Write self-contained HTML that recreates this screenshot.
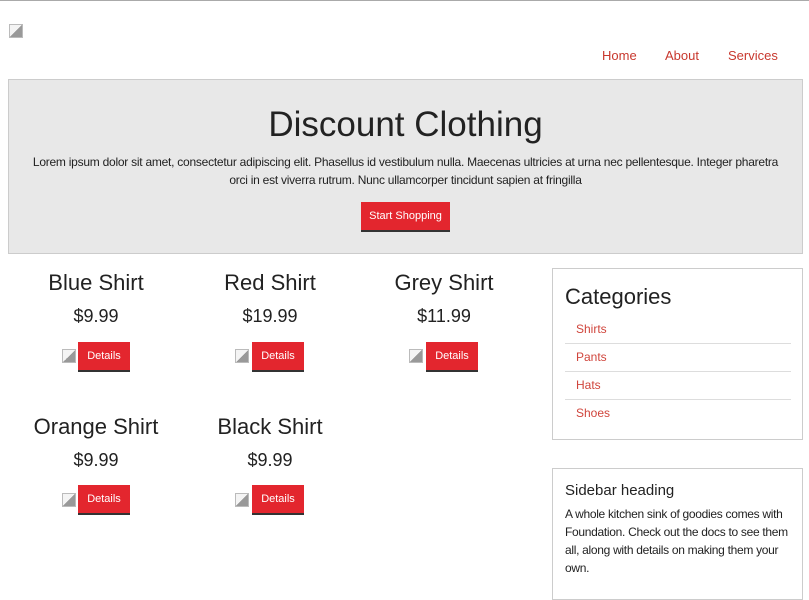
<!DOCTYPE html>
<html><head><style>
body{margin:0;width:809px;height:581px;overflow:hidden;background:#fff;font-family:"Liberation Sans",sans-serif;color:#222;position:relative;border-top:1px solid #aaa;box-sizing:border-box}
.a{position:absolute}
.nav{top:47px;font-size:13px;color:#c8382e}
.img{width:12px;height:12px;border:1px solid #bbb;background:linear-gradient(135deg,#f4f4f4 50%,#999 50%)}
.hero{left:8px;top:78px;width:793px;height:173px;background:#e8e8e8;border:1px solid #ccc}
.btn{background:#e3262e;color:#fff;font-size:11px;text-align:center;border-bottom:2px solid #333;box-sizing:border-box}
.t{font-size:22px;text-align:center;width:170px}
.p{font-size:18px;text-align:center;width:170px}
.box{left:552px;width:249px;border:1px solid #ccc}
.cat{font-size:12px;color:#d0453c;padding-left:11px;height:27px;line-height:27px;border-bottom:1px solid #ddd}
</style></head><body>
<div class="a img" style="left:9px;top:23px"></div>
<div class="a nav" style="left:602px">Home</div>
<div class="a nav" style="left:665px">About</div>
<div class="a nav" style="left:728px">Services</div>
<div class="a hero">
<div style="text-align:center;font-size:35px;margin-top:25px">Discount Clothing</div>
<div style="text-align:center;font-size:12px;letter-spacing:-0.25px;line-height:18px;margin:8px 14px 0">Lorem ipsum dolor sit amet, consectetur adipiscing elit. Phasellus id vestibulum nulla. Maecenas ultricies at urna nec pellentesque. Integer pharetra orci in est viverra rutrum. Nunc ullamcorper tincidunt sapien at fringilla</div>
</div>
<div class="a btn" style="left:361px;top:201px;width:89px;height:30px;line-height:28px">Start Shopping</div>

<div class="a t" style="left:11px;top:269px">Blue Shirt</div><div class="a p" style="left:11px;top:305px">$9.99</div>
<div class="a img" style="left:62px;top:348px"></div><div class="a btn" style="left:78px;top:341px;width:52px;height:30px;line-height:28px">Details</div>
<div class="a t" style="left:185px;top:269px">Red Shirt</div><div class="a p" style="left:185px;top:305px">$19.99</div>
<div class="a img" style="left:235px;top:348px"></div><div class="a btn" style="left:252px;top:341px;width:52px;height:30px;line-height:28px">Details</div>
<div class="a t" style="left:359px;top:269px">Grey Shirt</div><div class="a p" style="left:359px;top:305px">$11.99</div>
<div class="a img" style="left:409px;top:348px"></div><div class="a btn" style="left:426px;top:341px;width:52px;height:30px;line-height:28px">Details</div>
<div class="a t" style="left:11px;top:413px">Orange Shirt</div><div class="a p" style="left:11px;top:449px">$9.99</div>
<div class="a img" style="left:62px;top:492px"></div><div class="a btn" style="left:78px;top:484px;width:52px;height:30px;line-height:28px">Details</div>
<div class="a t" style="left:185px;top:413px">Black Shirt</div><div class="a p" style="left:185px;top:449px">$9.99</div>
<div class="a img" style="left:235px;top:492px"></div><div class="a btn" style="left:252px;top:484px;width:52px;height:30px;line-height:28px">Details</div>

<div class="a box" style="top:267px;height:170px">
<div style="font-size:22px;margin:15px 0 0 12px">Categories</div>
<div style="margin:6px 11px 0 12px">
<div class="cat">Shirts</div><div class="cat">Pants</div><div class="cat">Hats</div><div class="cat" style="border:none">Shoes</div>
</div></div>
<div class="a box" style="top:467px;height:130px">
<div style="font-size:15px;margin:13px 0 0 12px">Sidebar heading</div>
<div style="font-size:12px;letter-spacing:-0.3px;line-height:18px;margin:6px 8px 0 12px">A whole kitchen sink of goodies comes with Foundation. Check out the docs to see them all, along with details on making them your own.</div>
</div>
</body></html>
